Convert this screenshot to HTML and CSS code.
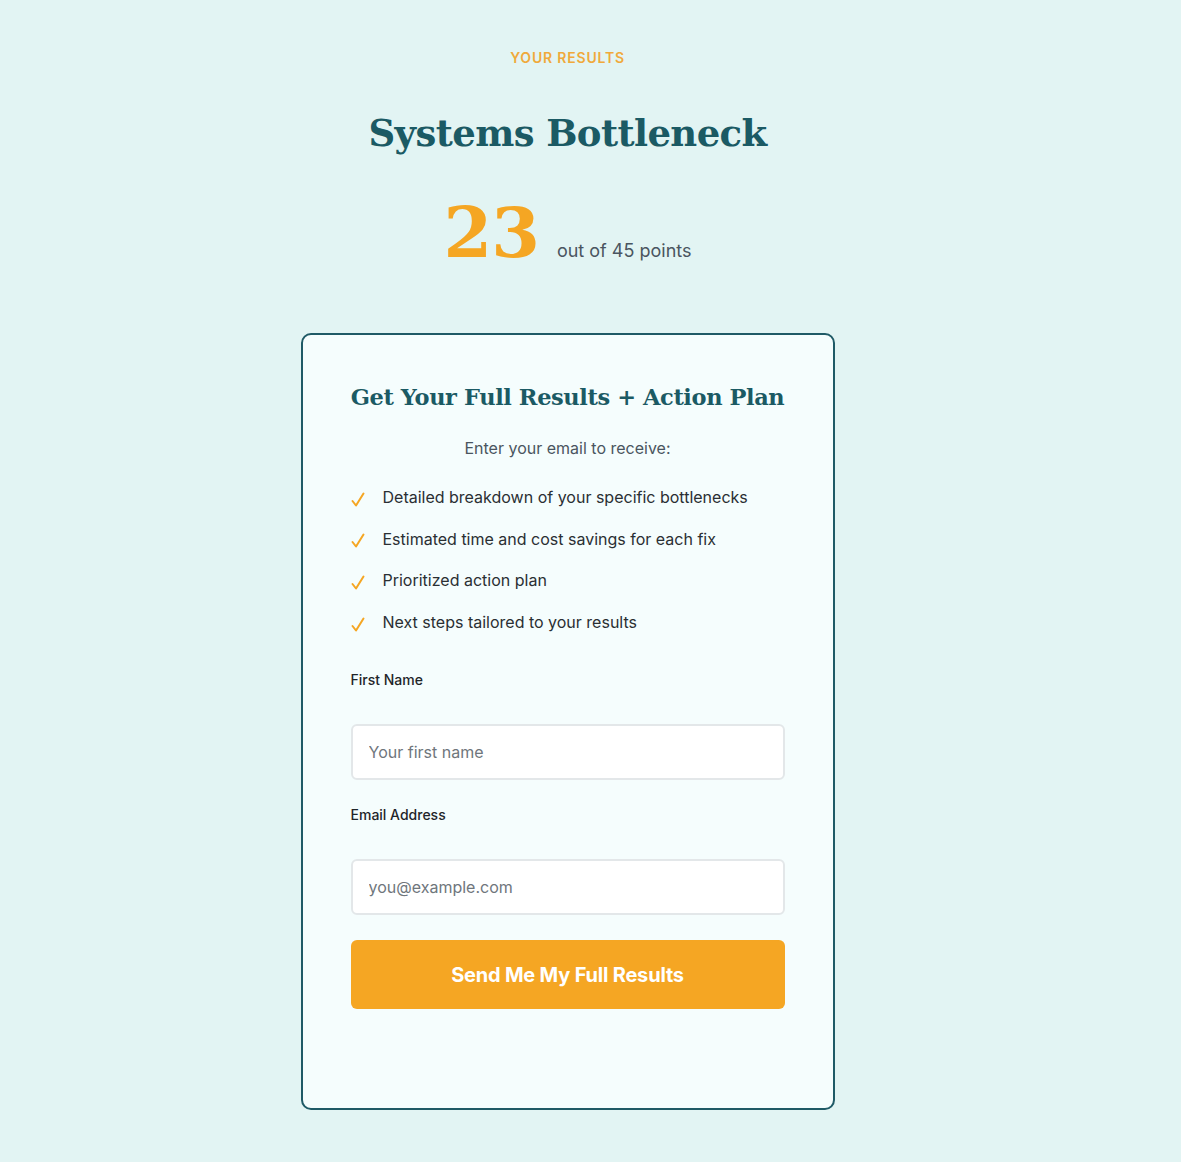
FILE: index.html
```html
<!DOCTYPE html>
<html lang="en">
<head>
<meta charset="utf-8">
<title>Your Results</title>
<link rel="stylesheet" href="styles.css">
</head>
<body>
<main class="page">
  <p class="eyebrow">YOUR RESULTS</p>
  <h1 class="title">Systems Bottleneck</h1>
  <div class="score">
    <span class="score-num">23</span>
    <span class="score-total">out of 45 points</span>
  </div>
  <section class="card">
    <h2 class="card-title">Get Your Full Results + Action Plan</h2>
    <p class="card-sub">Enter your email to receive:</p>
    <ul class="benefits">
      <li><svg class="check" viewBox="0 0 14 15" width="14" height="15"><path d="M1.5 9 L5 13.5 L12.5 1.5" fill="none" stroke="#f5a623" stroke-width="2" stroke-linecap="round" stroke-linejoin="round"/></svg>Detailed breakdown of your specific bottlenecks</li>
      <li><svg class="check" viewBox="0 0 14 15" width="14" height="15"><path d="M1.5 9 L5 13.5 L12.5 1.5" fill="none" stroke="#f5a623" stroke-width="2" stroke-linecap="round" stroke-linejoin="round"/></svg>Estimated time and cost savings for each fix</li>
      <li><svg class="check" viewBox="0 0 14 15" width="14" height="15"><path d="M1.5 9 L5 13.5 L12.5 1.5" fill="none" stroke="#f5a623" stroke-width="2" stroke-linecap="round" stroke-linejoin="round"/></svg>Prioritized action plan</li>
      <li><svg class="check" viewBox="0 0 14 15" width="14" height="15"><path d="M1.5 9 L5 13.5 L12.5 1.5" fill="none" stroke="#f5a623" stroke-width="2" stroke-linecap="round" stroke-linejoin="round"/></svg>Next steps tailored to your results</li>
    </ul>
    <form class="form">
      <label class="label" for="fn">First Name</label>
      <input class="input" id="fn" type="text" placeholder="Your first name">
      <label class="label" for="em">Email Address</label>
      <input class="input" id="em" type="email" placeholder="you@example.com">
      <button class="btn" type="button">Send Me My Full Results</button>
    </form>
  </section>
</main>
</body>
</html>
```

FILE: styles.css
```css
* { box-sizing: border-box; }
html, body { margin: 0; padding: 0; }
body {
  background: #e2f4f3;
  font-family: Inter, "Noto Sans", sans-serif;
  color: #2a2f33;
}
.page {
  display: flex;
  flex-direction: column;
  align-items: center;
  padding: 49px 46px 53px 0;
}
.eyebrow {
  margin: 0;
  font-size: 14px;
  line-height: 18px;
  font-weight: 600;
  letter-spacing: 0.8px;
  color: #f0a93a;
}
.title {
  margin: 38px 0 0;
  font-family: "DejaVu Serif", Georgia, serif;
  font-weight: 700;
  font-size: 37px;
  line-height: 56px;
  color: #1b5a64;
  letter-spacing: -0.6px;
}
.score {
  display: flex;
  align-items: baseline;
  gap: 18px;
  margin-top: 37px;
  height: 80px;
}
.score-num {
  font-family: "DejaVu Serif", Georgia, serif;
  font-weight: 700;
  font-size: 70px;
  line-height: 70px;
  color: #f5a623;
  letter-spacing: -1px;
}
.score-total {
  font-size: 18px;
  color: #4a5560;
}
.card {
  width: 534px;
  margin-top: 55px;
  background: #f5fdfd;
  border: 2px solid #1f5a66;
  border-radius: 10px;
  padding: 44px 48px 99px;
}
.card-title {
  margin: 0;
  text-align: center;
  font-family: "DejaVu Serif", Georgia, serif;
  font-weight: 700;
  font-size: 22.5px;
  line-height: 36px;
  letter-spacing: -0.4px;
  color: #1b5a64;
  white-space: nowrap;
}
.card-sub {
  margin: 21px 0 0;
  text-align: center;
  font-size: 16px;
  line-height: 24px;
  color: #4a5560;
}
.benefits {
  list-style: none;
  margin: 25px 0 0;
  padding: 0;
  display: flex;
  flex-direction: column;
  gap: 16.7px;
}
.benefits li {
  display: flex;
  align-items: center;
  font-size: 16px;
  line-height: 25px;
  color: #2a2f33;
}
.check {
  flex: none;
  display: block;
  margin: 3px 18px 0 0;
}
.form {
  display: flex;
  flex-direction: column;
  margin-top: 35px;
}
.label {
  font-size: 14px;
  line-height: 20px;
  font-weight: 500;
  color: #1f2529;
  margin-bottom: 34px;
}
.input {
  height: 56px;
  width: 100%;
  border: 2px solid #e3e7e9;
  border-radius: 6px;
  background: #ffffff;
  padding: 0 16px;
  font-family: Inter, "Noto Sans", sans-serif;
  font-size: 16px;
  color: #2a2f33;
  margin-bottom: 25px;
}
.input::placeholder { color: #6f767c; }
.btn {
  height: 69px;
  width: 100%;
  border: none;
  border-radius: 6px;
  background: #f5a623;
  color: #ffffff;
  font-family: Inter, "Noto Sans", sans-serif;
  font-size: 20px;
  font-weight: 700;
  letter-spacing: -0.2px;
}
```
